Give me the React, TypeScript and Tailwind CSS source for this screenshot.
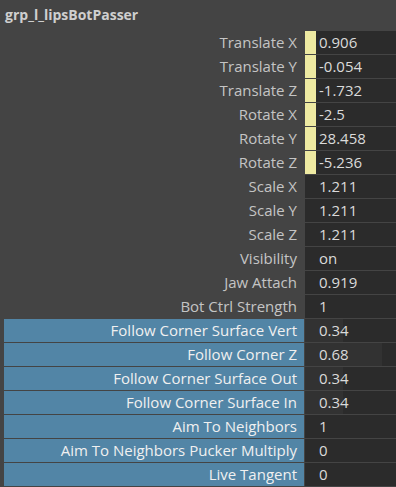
import React from "react";

type Attr = {
  label: string;
  value: string;
  keyed?: boolean;
  custom?: boolean;
  bar?: string;
};

const attrs: Attr[] = [
  { label: "Translate X", value: "0.906", keyed: true },
  { label: "Translate Y", value: "-0.054", keyed: true },
  { label: "Translate Z", value: "-1.732", keyed: true },
  { label: "Rotate X", value: "-2.5", keyed: true },
  { label: "Rotate Y", value: "28.458", keyed: true },
  { label: "Rotate Z", value: "-5.236", keyed: true },
  { label: "Scale X", value: "1.211" },
  { label: "Scale Y", value: "1.211" },
  { label: "Scale Z", value: "1.211" },
  { label: "Visibility", value: "on" },
  { label: "Jaw Attach", value: "0.919" },
  { label: "Bot Ctrl Strength", value: "1" },
  { label: "Follow Corner Surface Vert", value: "0.34", custom: true, bar: "w-[38px]" },
  { label: "Follow Corner Z", value: "0.68", custom: true, bar: "w-[77px]" },
  { label: "Follow Corner Surface Out", value: "0.34", custom: true, bar: "w-[38px]" },
  { label: "Follow Corner Surface In", value: "0.34", custom: true, bar: "w-[38px]" },
  { label: "Aim To Neighbors", value: "1", custom: true },
  { label: "Aim To Neighbors Pucker Multiply", value: "0", custom: true },
  { label: "Live Tangent", value: "0", custom: true },
];

function Row({ a }: { a: Attr }) {
  return (
    <div className="flex h-6 shrink-0">
      <div className="w-[305px] pl-1 shrink-0">
        <div
          className={
            a.custom
              ? "h-[23px] w-[300px] bg-[#5285a6] text-[#f0f0f0] flex items-center justify-end pr-[7px]"
              : "h-[23px] w-[300px] text-[#c4c4c4] flex items-center justify-end pr-[7px]"
          }
        >
          {a.label}
        </div>
      </div>
      <div className="flex-1 h-[23px] bg-[#2b2b2b] relative flex items-center text-[#dadada]">
        {a.keyed && <div className="w-[11px] h-full bg-[#eeeaa2] shrink-0" />}
        {a.bar && <div className={`absolute left-0 top-0 h-full bg-[#323232] ${a.bar}`} />}
        <span className={a.keyed ? "relative pl-[3px]" : "relative pl-[14px]"}>{a.value}</span>
      </div>
    </div>
  );
}

export default function App() {
  return (
    <div
      className="w-[396px] h-[487px] bg-[#444444] overflow-hidden flex flex-col text-[15px] leading-none"
      style={{ fontFamily: '"Open Sans", "Noto Sans", sans-serif' }}
    >
      <div className="h-[31px] shrink-0 flex items-center pl-[5px] pb-[2px] text-[14px] font-bold text-[#cfcfcf]">
        grp_l_lipsBotPasser
      </div>
      {attrs.map((a) => (
        <Row key={a.label} a={a} />
      ))}
    </div>
  );
}
